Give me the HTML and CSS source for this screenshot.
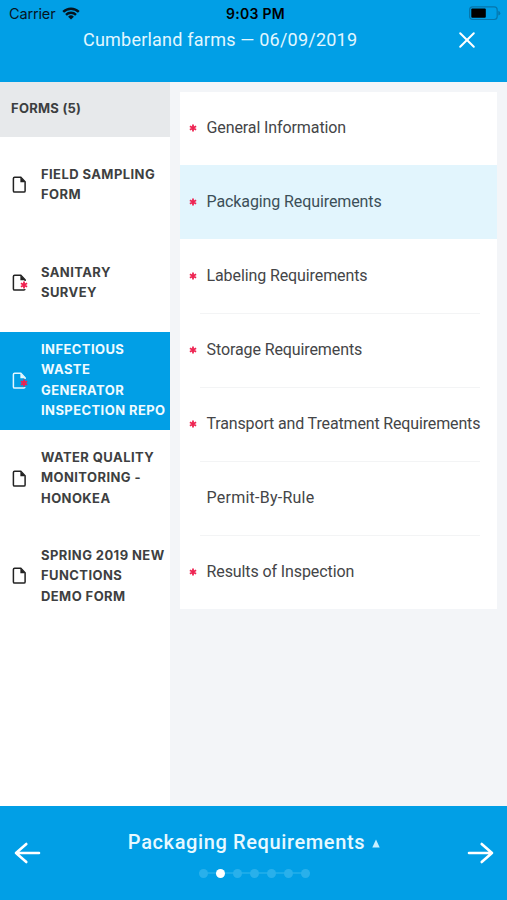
FILE: index.html
```html
<!DOCTYPE html>
<html lang="en">
<head>
<meta charset="utf-8">
<title>Inspection forms</title>
<link rel="stylesheet" href="styles.css">
</head>
<body>
<svg width="0" height="0" class="defs">
  <symbol id="doc" viewBox="0 0 16 18"><path d="M2.6 1.3h6.2l4.3 4.4v9.2q0 1.2-1.2 1.2H2.6q-1.2 0-1.2-1.2V2.5q0-1.2 1.2-1.2z" fill="none" stroke="currentColor" stroke-width="1.5"/><path d="M8.4 1.5v4.7h4.7z" fill="currentColor"/></symbol>
  <symbol id="doc-req" viewBox="0 0 16 18"><path d="M13.1 7V5.7L8.8 1.3H2.6q-1.2 0-1.2 1.2v12.4q0 1.2 1.2 1.2h9.3q1 0 1.2-.9" fill="none" stroke="currentColor" stroke-width="1.5"/><path d="M8.4 1.5v4.7h4.7z" fill="currentColor"/></symbol>
  <symbol id="star" viewBox="0 0 8 8"><path d="M4 .6v6.8M.9 2.2l6.2 3.6M7.1 2.2L.9 5.8" stroke="currentColor" stroke-width="1.8"/></symbol>
</svg>
<div class="app">
  <header class="top">
    <div class="status">
      <div class="carrier"><span>Carrier</span>
        <svg width="18" height="13" viewBox="0 0 18 13"><path d="M1.2 4.9a11.2 11.2 0 0 1 15.6 0M4 7.8a7.2 7.2 0 0 1 10 0" fill="none" stroke="#06151f" stroke-width="2.4"/><path d="M9 12.6L6.1 9.7a4.2 4.2 0 0 1 5.8 0z" fill="#06151f"/></svg>
      </div>
      <div class="clock">9:03 PM</div>
      <svg class="battery" width="32" height="15" viewBox="0 0 32 15"><rect x=".6" y=".9" width="27.6" height="12.6" rx="3" fill="none" stroke="#0676ac" stroke-width="1.2"/><rect x="2.3" y="2.6" width="14.5" height="9.2" rx="1" fill="#000"/><path d="M29.3 4.8q2 .7 2 2.4t-2 2.4z" fill="#0676ac"/></svg>
    </div>
    <div class="heading">
      <h1>Cumberland farms — 06/09/2019</h1>
      <svg class="close" width="18" height="18" viewBox="0 0 18 18"><path d="M2.2 2.2l13.6 13.6M15.8 2.2L2.2 15.8" stroke="#fff" stroke-width="2" stroke-linecap="round"/></svg>
    </div>
  </header>
  <main>
    <nav class="forms">
      <h2>FORMS (5)</h2>
      <div class="form"><span class="icon"><svg><use href="#doc"/></svg></span><p>FIELD SAMPLING<br>FORM</p></div>
      <div class="form"><span class="icon"><svg><use href="#doc-req"/></svg><svg class="star"><use href="#star"/></svg></span><p>SANITARY<br>SURVEY</p></div>
      <div class="form active"><span class="icon"><svg><use href="#doc-req"/></svg><svg class="star"><use href="#star"/></svg></span><p>INFECTIOUS<br>WASTE<br>GENERATOR<br>INSPECTION REPO</p></div>
      <div class="form"><span class="icon"><svg><use href="#doc"/></svg></span><p>WATER QUALITY<br>MONITORING -<br>HONOKEA</p></div>
      <div class="form"><span class="icon"><svg><use href="#doc"/></svg></span><p>SPRING 2019 NEW<br>FUNCTIONS<br>DEMO FORM</p></div>
    </nav>
    <section class="content">
      <ul class="sections">
        <li><svg class="req"><use href="#star"/></svg><span>General Information</span></li>
        <li class="selected"><svg class="req"><use href="#star"/></svg><span>Packaging Requirements</span></li>
        <li><svg class="req"><use href="#star"/></svg><span>Labeling Requirements</span></li>
        <li><svg class="req"><use href="#star"/></svg><span>Storage Requirements</span></li>
        <li class="long"><svg class="req"><use href="#star"/></svg><span>Transport and Treatment Requirements</span></li>
        <li class="optional"><i class="req"></i><span>Permit-By-Rule</span></li>
        <li><svg class="req"><use href="#star"/></svg><span>Results of Inspection</span></li>
      </ul>
    </section>
  </main>
  <footer>
    <svg width="27" height="22" viewBox="0 0 27 22"><path d="M25 11H2M12.3 2L2 11l10.3 9" fill="none" stroke="#fff" stroke-width="2.6" stroke-linecap="round" stroke-linejoin="round"/></svg>
    <div class="pager">
      <div class="current"><span>Packaging Requirements</span><svg width="8" height="9" viewBox="0 0 8 9"><path d="M4 .4L7.7 8.6H.3z" fill="#c8f0ff"/></svg></div>
      <div class="dots"><i></i><i class="on"></i><i></i><i></i><i></i><i></i><i></i></div>
    </div>
    <svg width="27" height="22" viewBox="0 0 27 22"><path d="M2 11h23M14.7 2L25 11l-10.3 9" fill="none" stroke="#fff" stroke-width="2.6" stroke-linecap="round" stroke-linejoin="round"/></svg>
  </footer>
</div>
</body>
</html>
```
FILE: styles.css
```css
* { box-sizing: border-box; margin: 0; padding: 0; }
body { font-family: Roboto, "Liberation Sans", sans-serif; background: #f3f5f8; overflow: hidden; }
.defs { position: absolute; }
.app { width: 507px; height: 900px; display: flex; flex-direction: column; }
.top { height: 81.5px; background: #019fe6; flex: none; }
.status { height: 27px; display: grid; grid-template-columns: 1fr auto 1fr; align-items: center; padding: 1px 5px 0 9px; color: #06151f; }
.carrier { display: flex; align-items: center; gap: 7px; font: 14.5px/18px Inter, sans-serif; letter-spacing: -.15px; }
.carrier svg { margin-top: -2px; }
.clock { font: 600 14px/18px Inter, sans-serif; color: #000; letter-spacing: .3px; }
.battery { justify-self: end; margin: -1px 1px 0 0; }
.heading { height: 26px; display: flex; align-items: center; padding: 0 31px 0 83px; justify-content: space-between; }
h1 { font-size: 18px; font-weight: 400; line-height: 24px; color: #e2f7ff; letter-spacing: .22px; white-space: nowrap; }
main { flex: 1; display: flex; min-height: 0; }
.forms { width: 169.5px; background: #fff; flex: none; }
h2 { height: 55px; background: #e7e9eb; padding-left: 11px; font: 700 13px/52px Inter, sans-serif; color: #3c3e40; letter-spacing: .25px; }
.form { height: 97.75px; display: flex; align-items: center; padding: 0 3px 0 12px; color: #222; }
.form p { font: 700 13px/20.4px Inter, sans-serif; letter-spacing: .42px; color: #3e3f41; white-space: nowrap; flex: 1; padding-bottom: 2px; }
.icon { position: relative; width: 29px; height: 18px; flex: none; }
.icon svg { width: 16px; height: 18px; display: block; }
.icon .star { position: absolute; left: 8px; top: 7px; width: 8px; height: 8px; color: #f0204f; }
.form.active { background: #019fe6; color: #e5f7ff; }
.form.active p { color: #f0fbff; }
.content { flex: 1; padding: 10px 10px 0; }
.sections { list-style: none; background: #fff; height: 517.5px; display: grid; grid-template-rows: repeat(7, 1fr); }
.sections li { display: flex; align-items: center; padding: 0 0 1px 9px; color: #444547; font-size: 16px; white-space: nowrap; background: linear-gradient(#f3f4f5, #f3f4f5) 20px 0 / 280px 1px no-repeat; }
.sections li.selected { background: #e2f5fd; color: #3c4f58; }
.sections li:first-child, .sections li.selected + li { background: none; }
.sections span { letter-spacing: -.1px; }
.sections .long span { letter-spacing: -.15px; }
.sections .optional span { letter-spacing: .25px; }
.req { width: 8px; height: 8px; margin: 0 10px 0 0; color: #ee2452; flex: none; }
footer { height: 94px; background: #019fe6; flex: none; display: flex; justify-content: space-between; align-items: center; padding: 0 13px 0 14px; }
.pager { display: flex; flex-direction: column; align-items: center; }
.current { display: flex; align-items: center; gap: 7px; font-size: 20px; font-weight: 500; line-height: 26px; color: #e8f9ff; letter-spacing: .62px; }
.current svg { margin-top: 3px; }
.dots { display: flex; gap: 8px; margin: 14px 0 0 1px; background: linear-gradient(#1babe9, #1babe9) center / 100% 2px no-repeat; }
.dots i { width: 9px; height: 9px; border-radius: 50%; background: #29b0eb; }
.dots .on { background: #fff; }
```
